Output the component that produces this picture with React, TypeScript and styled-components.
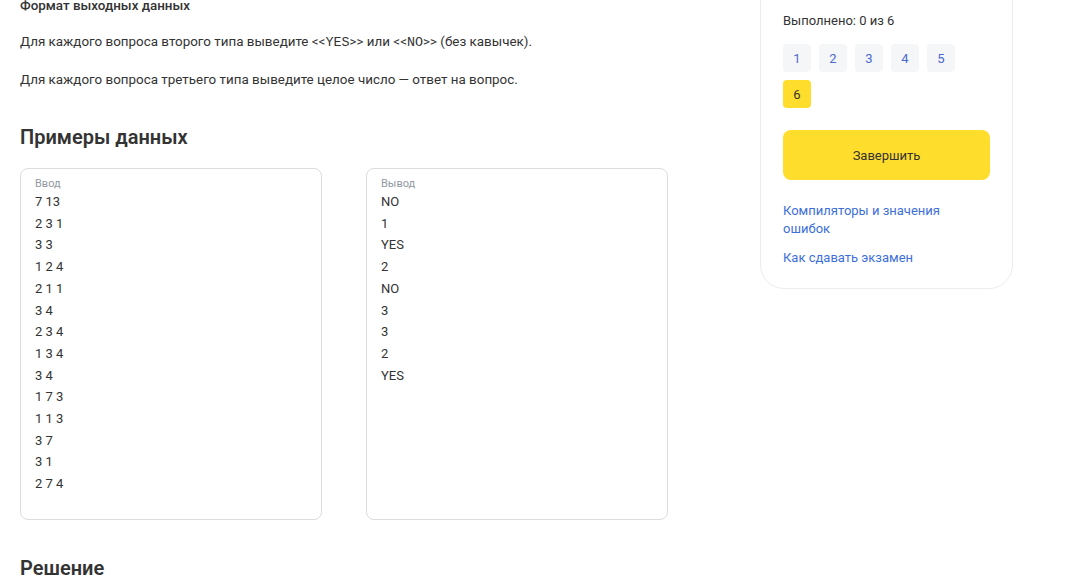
import React from 'react'
import styled, { createGlobalStyle } from 'styled-components'

const GlobalStyle = createGlobalStyle`
  html, body {
    margin: 0;
    padding: 0;
    background: #ffffff;
    overflow: hidden;
  }
  body {
    font-family: Roboto, 'Noto Sans', sans-serif;
    color: #333333;
  }
`

const Page = styled.div`
  display: flex;
  align-items: flex-start;
  margin-top: -24px;
  padding-left: 20px;
`

const Main = styled.main`
  width: 648px;
  padding-top: 20px;
`

const SubTitle = styled.div`
  font-size: 13.4px;
  line-height: 20px;
  font-weight: 500;
  color: #333333;
  margin-bottom: 16px;
`

const Paragraph = styled.p`
  margin: 0 0 17px;
  font-size: 13.4px;
  line-height: 20px;
  color: #333333;
`

const Mono = styled.span`
  font-family: 'Courier New', 'Liberation Mono', monospace;
  font-size: 13.4px;
`

const Heading = styled.h2<{ $top: number }>`
  margin: ${p => p.$top}px 0 0;
  font-size: 20px;
  line-height: 28px;
  font-weight: 600;
  color: #333333;
`

const Samples = styled.div`
  display: grid;
  grid-template-columns: 1fr 1fr;
  gap: 44px;
  margin-top: 17px;
`

const SampleBox = styled.div`
  border: 1px solid #dddddd;
  border-radius: 8px;
  padding: 7px 14px 24px;
`

const SampleLabel = styled.div`
  font-size: 11px;
  line-height: 15px;
  color: #9299a2;
`

const SampleLine = styled.div`
  font-size: 13px;
  line-height: 21.7px;
  color: #333333;
`

const Sidebar = styled.aside`
  width: 253px;
  margin-left: 92px;
  box-sizing: border-box;
  border: 1px solid #ececec;
  border-radius: 24px;
  padding: 34px 22px 21px;
`

const Progress = styled.div`
  font-size: 13px;
  line-height: 20px;
  color: #333333;
  margin-bottom: 13px;
`

const TaskGrid = styled.div`
  display: flex;
  flex-wrap: wrap;
  gap: 8px;
`

const TaskButton = styled.button<{ $active?: boolean }>`
  width: 28px;
  height: 28px;
  border: none;
  border-radius: 4px;
  padding: 0;
  font-family: inherit;
  font-size: 13px;
  background: ${p => (p.$active ? '#ffdd2d' : '#f5f6f8')};
  color: ${p => (p.$active ? '#333333' : '#4a69cf')};
  cursor: pointer;
`

const FinishButton = styled.button`
  width: 100%;
  height: 50px;
  margin-top: 22px;
  border: none;
  border-radius: 8px;
  background: #ffdd2d;
  font-family: inherit;
  font-size: 13px;
  color: #333333;
  cursor: pointer;
`

const Links = styled.div`
  display: flex;
  flex-direction: column;
  gap: 11px;
  margin-top: 22px;
`

const SideLink = styled.a`
  font-size: 13px;
  line-height: 18px;
  color: #3d6fd9;
  text-decoration: none;
`

const input = ['7 13', '2 3 1', '3 3', '1 2 4', '2 1 1', '3 4', '2 3 4', '1 3 4', '3 4', '1 7 3', '1 1 3', '3 7', '3 1', '2 7 4']
const output = ['NO', '1', 'YES', '2', 'NO', '3', '3', '2', 'YES']

const App = () => (
  <>
    <GlobalStyle />
    <Page>
      <Main>
        <SubTitle>Формат выходных данных</SubTitle>
        <Paragraph>
          Для каждого вопроса второго типа выведите &lt;&lt;<Mono>YES</Mono>&gt;&gt; или &lt;&lt;<Mono>NO</Mono>&gt;&gt; (без кавычек).
        </Paragraph>
        <Paragraph>Для каждого вопроса третьего типа выведите целое число — ответ на вопрос.</Paragraph>
        <Heading $top={33}>Примеры данных</Heading>
        <Samples>
          <SampleBox>
            <SampleLabel>Ввод</SampleLabel>
            {input.map((l, i) => (
              <SampleLine key={i}>{l}</SampleLine>
            ))}
          </SampleBox>
          <SampleBox>
            <SampleLabel>Вывод</SampleLabel>
            {output.map((l, i) => (
              <SampleLine key={i}>{l}</SampleLine>
            ))}
          </SampleBox>
        </Samples>
        <Heading $top={34}>Решение</Heading>
      </Main>
      <Sidebar>
        <Progress>Выполнено: 0 из 6</Progress>
        <TaskGrid>
          {[1, 2, 3, 4, 5, 6].map(n => (
            <TaskButton key={n} $active={n === 6}>
              {n}
            </TaskButton>
          ))}
        </TaskGrid>
        <FinishButton>Завершить</FinishButton>
        <Links>
          <SideLink href="#">Компиляторы и значения ошибок</SideLink>
          <SideLink href="#">Как сдавать экзамен</SideLink>
        </Links>
      </Sidebar>
    </Page>
  </>
)

export default App
